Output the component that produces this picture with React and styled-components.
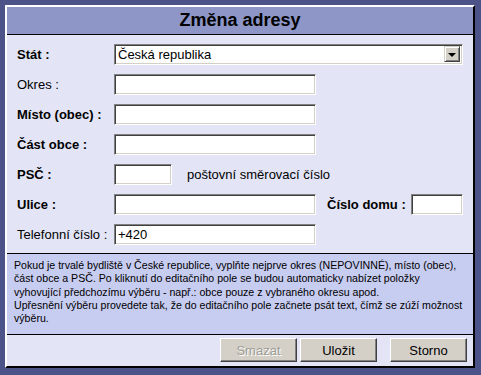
import React from "react";
import styled, { createGlobalStyle } from "styled-components";

const Global = createGlobalStyle`
  html, body { margin: 0; padding: 0; background: #4b5389; }
  body { font-family: "Liberation Sans", Arial, sans-serif; }
  * { box-sizing: border-box; }
`;

const Page = styled.div`
  width: 481px;
  height: 375px;
  padding: 5px 0 0 5px;
  background: #4b5389;
`;

const Window = styled.div`
  width: 470px;
  height: 363px;
  background: #e3e5f6;
  border-top: 2px solid #ffffff;
  border-left: 2px solid #ffffff;
  border-right: 2px solid #000000;
  border-bottom: 2px solid #000000;
  display: flex;
  flex-direction: column;
`;

const Header = styled.div`
  height: 28px;
  background: #8d96c7;
  border-bottom: 1px solid #000;
  display: flex;
  align-items: center;
  justify-content: center;
  font-weight: bold;
  font-size: 18px;
  color: #000;
  padding-bottom: 1px;
`;

const Form = styled.div`
  display: grid;
  grid-template-columns: 107px 1fr;
  grid-auto-rows: 21px;
  row-gap: 9px;
  padding: 9px 0 0 0;
  height: 218px;
`;

const Label = styled.div`
  font-size: 13px;
  font-weight: ${(p) => (p.$bold ? "bold" : "normal")};
  color: #000;
  display: flex;
  align-items: center;
  padding-left: 10px;
  white-space: nowrap;
`;

const Field = styled.div`
  display: flex;
  align-items: center;
  font-size: 13px;
`;

const Input = styled.div`
  width: ${(p) => p.$w}px;
  height: 21px;
  background: #fff;
  border-top: 1px solid #808080;
  border-left: 1px solid #808080;
  border-right: 1px solid #ffffff;
  border-bottom: 1px solid #ffffff;
  box-shadow: inset 1px 1px 0 #404040, inset -1px -1px 0 #d4d0c8;
  font-size: 13px;
  padding: 2px 0 0 3px;
  line-height: 15px;
  flex: none;
`;

const Select = styled(Input)`
  display: flex;
  justify-content: space-between;
  padding: 2px 2px 2px 3px;
`;

const DropBtn = styled.div`
  width: 16px;
  height: 16px;
  margin-top: -1px;
  background: #d4d0c8;
  border-top: 1px solid #d4d0c8;
  border-left: 1px solid #d4d0c8;
  border-right: 1px solid #404040;
  border-bottom: 1px solid #404040;
  box-shadow: inset 1px 1px 0 #ffffff, inset -1px -1px 0 #808080;
  display: flex;
  align-items: center;
  justify-content: center;
`;

const Arrow = styled.div`
  width: 0;
  height: 0;
  border-left: 4px solid transparent;
  border-right: 4px solid transparent;
  border-top: 4px solid #000;
  margin-top: 1px;
`;

const Hint = styled.span`
  margin-left: 15px;
  font-size: 13px;
`;

const InlineLabel = styled.span`
  margin-left: 11px;
  margin-right: 5px;
  font-weight: bold;
  font-size: 13px;
  white-space: nowrap;
`;

const Info = styled.div`
  border-top: 1px solid #000;
  border-bottom: 1px solid #000;
  background: #c7ccf1;
  height: 82px;
  padding: 5px 4px 0 7px;
  font-size: 10.6px;
  line-height: 13.3px;
  color: #000;
  white-space: nowrap;
`;

const Buttons = styled.div`
  flex: 1;
  display: flex;
  justify-content: flex-end;
  align-items: flex-start;
  padding: 3px 6px 0 0;
`;

const Button = styled.div`
  width: 77px;
  height: 24px;
  background: #d4d0c8;
  border-top: 1px solid #ffffff;
  border-left: 1px solid #ffffff;
  border-right: 1px solid #404040;
  border-bottom: 1px solid #404040;
  box-shadow: inset -1px -1px 0 #808080;
  font-size: 13px;
  display: flex;
  align-items: center;
  justify-content: center;
  color: ${(p) => (p.$disabled ? "#a09d97" : "#000")};
  text-shadow: ${(p) => (p.$disabled ? "1px 1px 0 #ffffff" : "none")};
  margin-left: ${(p) => p.$ml || 0}px;
`;

export default function App() {
  return (
    <Page>
      <Global />
      <Window>
        <Header>Změna adresy</Header>
        <Form>
          <Label $bold>Stát :</Label>
          <Field>
            <Select $w={349}>
              <span>Česká republika</span>
              <DropBtn>
                <Arrow />
              </DropBtn>
            </Select>
          </Field>
          <Label>Okres :</Label>
          <Field>
            <Input $w={202} />
          </Field>
          <Label $bold>Místo (obec) :</Label>
          <Field>
            <Input $w={202} />
          </Field>
          <Label $bold>Část obce :</Label>
          <Field>
            <Input $w={202} />
          </Field>
          <Label $bold>PSČ :</Label>
          <Field>
            <Input $w={58} />
            <Hint>poštovní směrovací číslo</Hint>
          </Field>
          <Label $bold>Ulice :</Label>
          <Field>
            <Input $w={202} />
            <InlineLabel>Číslo domu :</InlineLabel>
            <Input $w={52} />
          </Field>
          <Label>Telefonní číslo :</Label>
          <Field>
            <Input $w={202}>+420</Input>
          </Field>
        </Form>
        <Info>
          Pokud je trvalé bydliště v České republice, vyplňte nejprve okres (NEPOVINNÉ), místo (obec),
          <br />
          část obce a PSČ. Po kliknutí do editačního pole se budou automaticky nabízet položky
          <br />
          vyhovující předchozímu výběru - např.: obce pouze z vybraného okresu apod.
          <br />
          Upřesnění výběru provedete tak, že do editačního pole začnete psát text, čímž se zúží možnost
          <br />
          výběru.
        </Info>
        <Buttons>
          <Button $disabled>Smazat</Button>
          <Button $ml={3}>Uložit</Button>
          <Button $ml={13}>Storno</Button>
        </Buttons>
      </Window>
    </Page>
  );
}
